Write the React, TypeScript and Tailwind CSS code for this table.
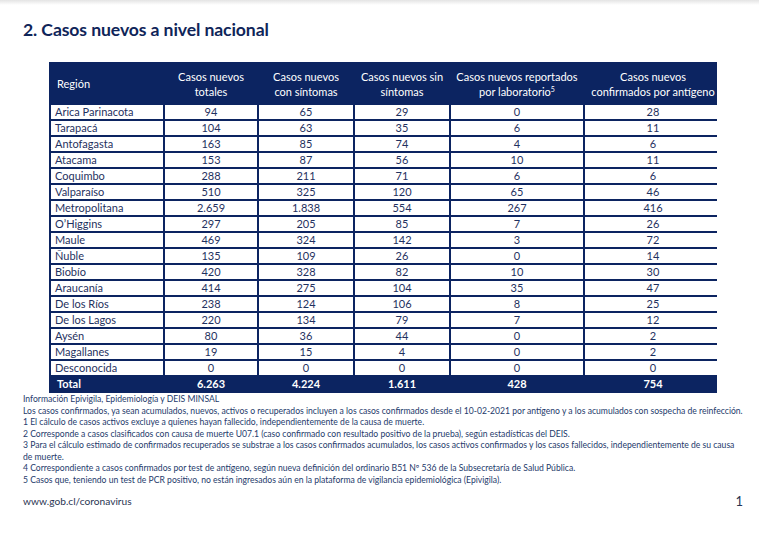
const rows: [string, string, string, string, string, string][] = [
  ['Arica Parinacota', '94', '65', '29', '0', '28'],
  ['Tarapacá', '104', '63', '35', '6', '11'],
  ['Antofagasta', '163', '85', '74', '4', '6'],
  ['Atacama', '153', '87', '56', '10', '11'],
  ['Coquimbo', '288', '211', '71', '6', '6'],
  ['Valparaíso', '510', '325', '120', '65', '46'],
  ['Metropolitana', '2.659', '1.838', '554', '267', '416'],
  ['O’Higgins', '297', '205', '85', '7', '26'],
  ['Maule', '469', '324', '142', '3', '72'],
  ['Ñuble', '135', '109', '26', '0', '14'],
  ['Biobío', '420', '328', '82', '10', '30'],
  ['Araucanía', '414', '275', '104', '35', '47'],
  ['De los Ríos', '238', '124', '106', '8', '25'],
  ['De los Lagos', '220', '134', '79', '7', '12'],
  ['Aysén', '80', '36', '44', '0', '2'],
  ['Magallanes', '19', '15', '4', '0', '2'],
  ['Desconocida', '0', '0', '0', '0', '0'],
];

const totals = ['6.263', '4.224', '1.611', '428', '754'];

const notes = [
  'Información Epivigila, Epidemiología y DEIS MINSAL',
  'Los casos confirmados, ya sean acumulados, nuevos, activos o recuperados incluyen a los casos confirmados desde el 10-02-2021 por antígeno y a los acumulados con sospecha de reinfección.',
  '1 El cálculo de casos activos excluye a quienes hayan fallecido, independientemente de la causa de muerte.',
  '2 Corresponde a casos clasificados con causa de muerte U07.1 (caso confirmado con resultado positivo de la prueba), según estadísticas del DEIS.',
  '3 Para el cálculo estimado de confirmados recuperados se substrae a los casos confirmados acumulados, los casos activos confirmados y los casos fallecidos, independientemente de su causa',
  'de muerte.',
  '4 Correspondiente a casos confirmados por test de antígeno, según nueva definición del ordinario B51 Nº 536 de la Subsecretaría de Salud Pública.',
  '5 Casos que, teniendo un test de PCR positivo, no están ingresados aún en la plataforma de vigilancia epidemiológica (Epivigila).',
];

export default function App() {
  return (
    <div
      className="relative w-[759px] h-[543px] bg-white overflow-hidden text-[#1f3160]"
      style={{ fontFamily: 'Lato, "Open Sans", sans-serif' }}
    >
      {/* faint page edge shadow */}
      <div className="h-[5px] bg-gradient-to-b from-[#e4e4e4] to-white" />

      <div className="pl-[23px] pt-[15px]">
        <h1 className="text-[17.6px] leading-[20px] font-bold text-[#0f2559] tracking-[-0.1px]">
          2. Casos nuevos a nivel nacional
        </h1>
      </div>

      {/* Table */}
      <div className="ml-[49px] mt-[22px] w-[668px] bg-[#0c2461] p-[2px]">
        <div className="grid grid-cols-[112px_92px_94px_94px_132px_136px] gap-[2px] text-[11px] leading-[14px]">
          <div className="h-[39px] flex items-center pl-[6px] text-white">Región</div>
          <div className="h-[39px] flex items-center justify-center text-center text-white leading-[15px]">
            Casos nuevos<br />totales
          </div>
          <div className="h-[39px] flex items-center justify-center text-center text-white leading-[15px]">
            Casos nuevos<br />con síntomas
          </div>
          <div className="h-[39px] flex items-center justify-center text-center text-white leading-[15px]">
            Casos nuevos sin<br />síntomas
          </div>
          <div className="h-[39px] flex items-center justify-center text-center text-white leading-[15px]">
            <span>
              Casos nuevos reportados<br />por laboratorio<sup className="text-[7px]">5</sup>
            </span>
          </div>
          <div className="h-[39px] flex items-center justify-center text-center text-white leading-[15px]">
            Casos nuevos<br />confirmados por antígeno
          </div>

          {rows.map(r =>
            r.map((c, i) => (
              <div
                key={r[0] + i}
                className={`h-[14px] bg-white ${i === 0 ? 'pl-[4px]' : 'text-center'}`}
              >
                {c}
              </div>
            ))
          )}

          <div className="h-[14px] pl-[6px] font-bold text-white">Total</div>
          {totals.map((t, i) => (
            <div key={i} className="h-[14px] text-center font-bold text-white">
              {t}
            </div>
          ))}
        </div>
      </div>

      {/* Footnotes */}
      <div className="pl-[23px] mt-[1px] text-[8.6px] leading-[11.5px] text-[#243a6b]">
        {notes.map((n, i) => (
          <p key={i} className="whitespace-nowrap">{n}</p>
        ))}
      </div>

      <div className="flex justify-between items-center pl-[23px] pr-[16px] mt-[6px] text-[#2a3552]">
        <span className="text-[10.2px]">www.gob.cl/coronavirus</span>
        <span className="text-[13px]">1</span>
      </div>
    </div>
  );
}
